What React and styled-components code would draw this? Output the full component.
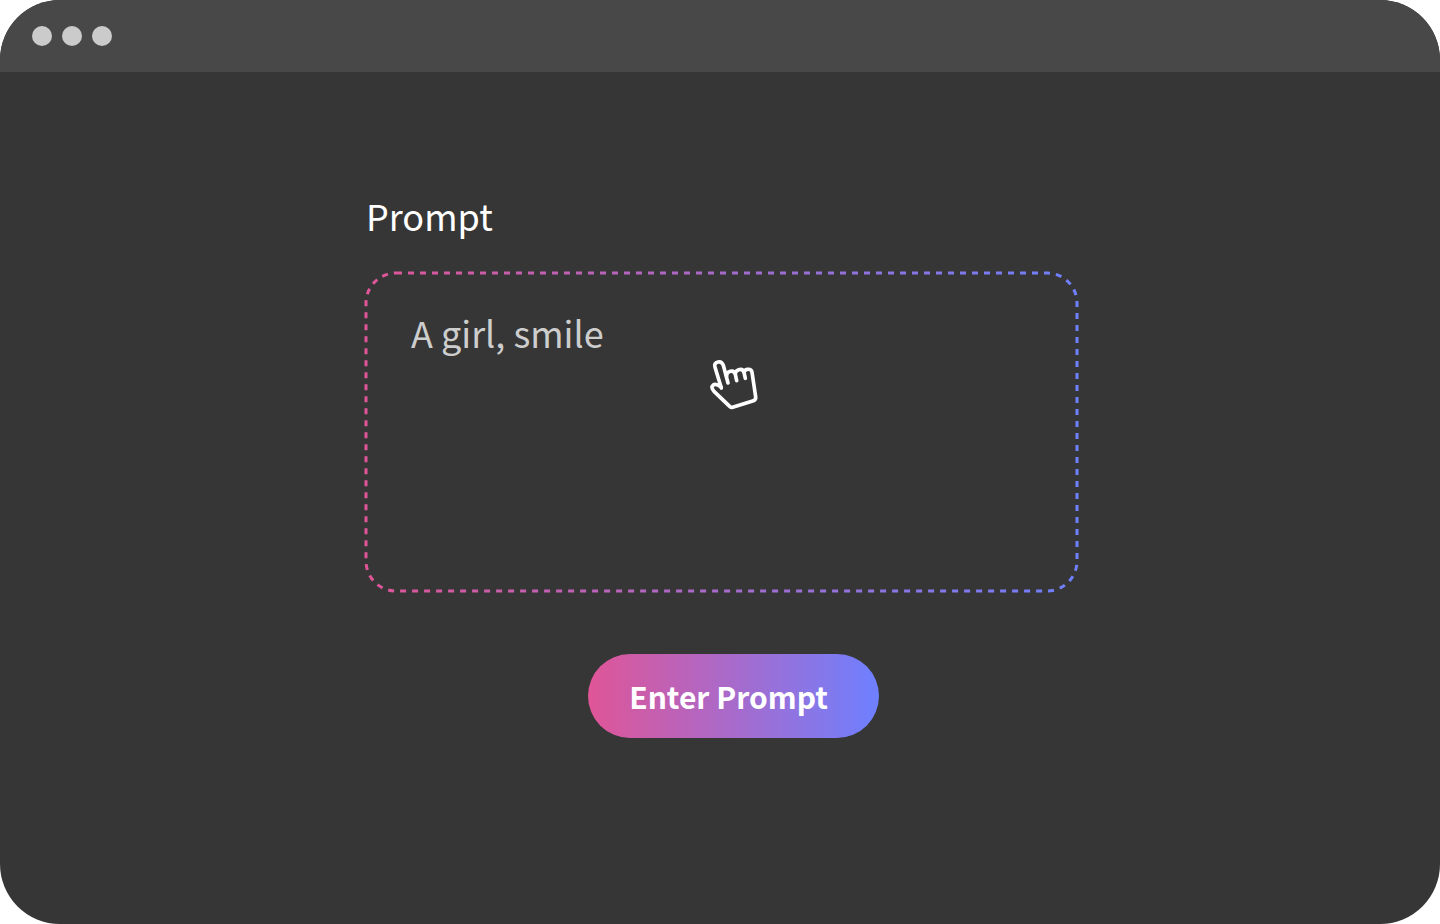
import React from "react";
import styled, { createGlobalStyle } from "styled-components";

const GlobalStyle = createGlobalStyle`
  *, *::before, *::after { box-sizing: border-box; }
  body {
    margin: 0;
    background: #ffffff;
    font-family: "Noto Sans CJK SC", "Noto Sans", sans-serif;
  }
`;

const Window = styled.div`
  display: flex;
  flex-direction: column;
  min-height: 100vh;
  border-radius: 60px;
  overflow: hidden;
  background: #363636;
`;

const TitleBar = styled.header`
  display: flex;
  align-items: center;
  gap: 10px;
  height: 72px;
  padding: 0 32px;
  background: #484848;
`;

const Dot = styled.span`
  width: 20px;
  height: 20px;
  border-radius: 50%;
  background: #cbcbcb;
`;

const Content = styled.main`
  display: flex;
  justify-content: center;
  padding: 119px 24px 64px;
`;

const PromptForm = styled.form`
  display: flex;
  flex-direction: column;
  width: 100%;
  max-width: 718px;
  padding-left: 3px;
`;

const Label = styled.label`
  padding-left: 2px;
  color: #ffffff;
  font-size: 36px;
  line-height: 48px;
`;

const Field = styled.div`
  position: relative;
  height: 322px;
  margin-top: 32px;
`;

const DashedFrame = styled.svg`
  position: absolute;
  top: 2px;
  left: 2px;
  width: calc(100% - 4px);
  height: calc(100% - 4px);
  overflow: visible;
  pointer-events: none;
`;

const TextArea = styled.textarea`
  display: block;
  width: 100%;
  height: 100%;
  padding: 37px 47px;
  border: 0;
  border-radius: 32px;
  outline: none;
  resize: none;
  background: transparent;
  color: #cdcdcd;
  font-family: inherit;
  font-size: 36px;
  line-height: 48px;
`;

const HandCursor = styled.svg`
  position: absolute;
  top: 79px;
  left: 336px;
  width: 70px;
  height: 70px;
  pointer-events: none;
`;

const Actions = styled.div`
  display: flex;
  justify-content: center;
  margin-top: 61px;
  padding-left: 24px;
`;

const SubmitButton = styled.button`
  width: 291px;
  height: 84px;
  padding: 0 10px 0 0;
  border: 0;
  border-radius: 42px;
  background: linear-gradient(90deg, #e05597 0%, #6e80ff 100%);
  color: #ffffff;
  font-family: inherit;
  font-size: 30px;
  font-weight: 700;
  line-height: 48px;
  cursor: pointer;
`;

export default function App() {
  return (
    <>
      <GlobalStyle />
      <Window>
        <TitleBar>
          <Dot />
          <Dot />
          <Dot />
        </TitleBar>
        <Content>
          <PromptForm onSubmit={(event) => event.preventDefault()}>
            <Label htmlFor="prompt">Prompt</Label>
            <Field>
              <TextArea id="prompt" defaultValue="A girl, smile" spellCheck={false} />
              <DashedFrame aria-hidden="true">
                <defs>
                  <linearGradient id="frame" x1="0" y1="0" x2="1" y2="0">
                    <stop offset="0" stopColor="#e05597" />
                    <stop offset="1" stopColor="#6e80ff" />
                  </linearGradient>
                </defs>
                <rect
                  width="100%"
                  height="100%"
                  rx="30"
                  fill="none"
                  stroke="url(#frame)"
                  strokeWidth="3"
                  strokeDasharray="6 6"
                />
              </DashedFrame>
              <HandCursor
                viewBox="0 0 210 210"
                fill="none"
                stroke="#ffffff"
                strokeWidth="11"
                strokeLinecap="round"
                strokeLinejoin="round"
                aria-hidden="true"
              >
                <path d="M64 114L45 52C42 43 46 38 54 36C62 34 67 38 70 46L84 99" />
                <path d="M80 78C79 70 83 66 91 64C99 62 104 66 106 73L110 92" />
                <path d="M106 71C106 64 110 61 116 59C124 57 130 60 132 67L136 85" />
                <path d="M132 66C133 61 137 59 142 58C150 57 155 60 156 67L167 140C168 148 165 151 158 153L98 172C95 173 92 172 89 169L42 124C35 116 34 110 40 105C45 101 52 103 63 111" />
              </HandCursor>
            </Field>
            <Actions>
              <SubmitButton type="submit">Enter Prompt</SubmitButton>
            </Actions>
          </PromptForm>
        </Content>
      </Window>
    </>
  );
}
